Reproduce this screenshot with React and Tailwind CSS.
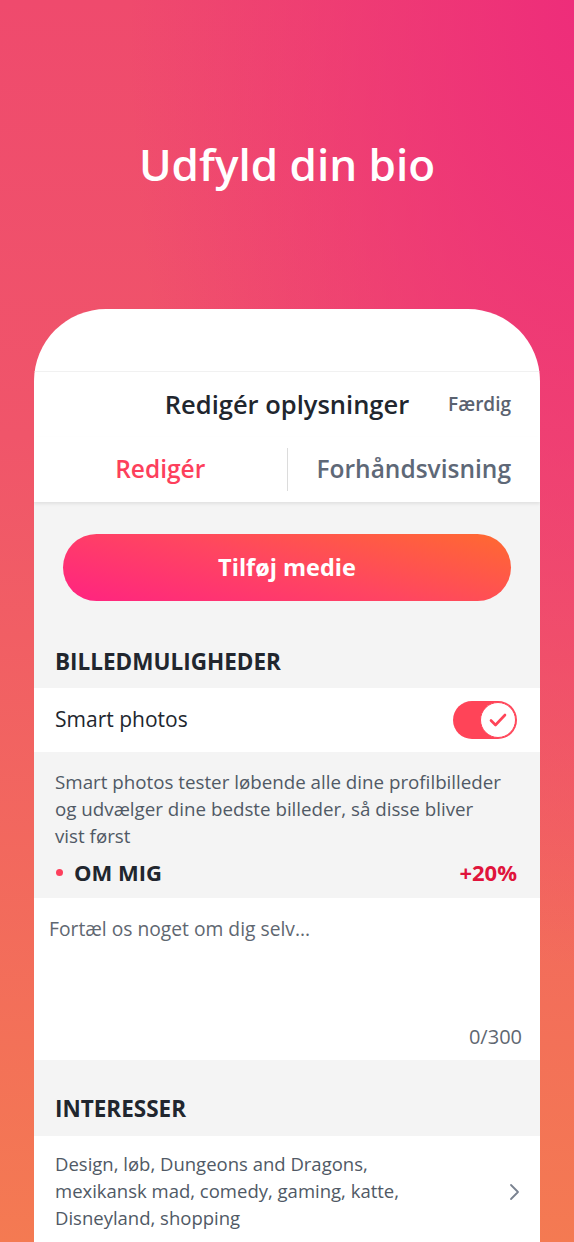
import React from 'react';

const FONT = { fontFamily: '"Open Sans", Lato, Arial, sans-serif' };

function Toggle() {
  return (
    <div className="w-[64px] h-[38px] rounded-full bg-[#ff4458] flex items-center justify-end p-[1px]">
      <div className="w-[36px] h-[36px] rounded-full bg-white border-[1.5px] border-[#ff4458] flex items-center justify-center">
        <svg width="18" height="14" viewBox="0 0 18 14" fill="none">
          <path d="M2 7.5l4.5 4.5L16 2" stroke="#ff4458" strokeWidth="2.6" strokeLinecap="round" strokeLinejoin="round" />
        </svg>
      </div>
    </div>
  );
}

function SectionTitle({ children }) {
  return (
    <div className="flex items-end px-[21px]">
      <span className="text-[22.5px] leading-[24px] font-bold text-[#21262e]">{children}</span>
    </div>
  );
}

export default function App() {
  return (
    <div
      style={FONT}
      className="w-[574px] h-[1242px] overflow-hidden flex flex-col bg-[radial-gradient(ellipse_at_top_right,#ee2d7a_0%,rgba(238,45,122,0)_55%),linear-gradient(180deg,#ef4a6d_0%,#f0556a_35%,#f47a52_100%)]"
    >
      <h1 className="pt-[136px] text-center text-white text-[44px] leading-[56px] font-semibold">Udfyld din bio</h1>

      <div className="mt-[117px] mx-[34px] flex-1 bg-white rounded-t-[72px] overflow-hidden flex flex-col">
        <div className="h-[63px] border-b border-[#f1f1f1]" />

        {/* header */}
        <div className="h-[65px] relative flex items-center justify-center">
          <span className="text-[25.5px] font-semibold text-[#21262e]">Redigér oplysninger</span>
          <span className="absolute right-[29px] text-[19px] font-semibold text-[#5a6270]">Færdig</span>
        </div>

        {/* tabs */}
        <div className="h-[65px] flex items-center shadow-[0_2px_3px_rgba(0,0,0,0.08)] relative z-10">
          <div className="flex-1 text-center text-[24.5px] font-semibold text-[#fd3f5c]">Redigér</div>
          <div className="w-px h-[43px] bg-[#dcdcdc]" />
          <div className="flex-1 text-center text-[24.5px] font-semibold text-[#5e6877]">Forhåndsvisning</div>
        </div>

        <div className="flex-1 bg-[#f4f4f4] flex flex-col">
          <div className="pt-[32px] px-[29px]">
            <button className="w-full h-[67px] rounded-full bg-[linear-gradient(15deg,#ff2381_0%,#ff4660_50%,#ff6a30_100%)] text-white text-[23.5px] font-bold">
              Tilføj medie
            </button>
          </div>

          <div className="h-[87px] flex items-end pb-[14px]">
            <SectionTitle>BILLEDMULIGHEDER</SectionTitle>
          </div>

          <div className="h-[64px] bg-white flex items-center justify-between pl-[21px] pr-[23px]">
            <span className="text-[21px] text-[#21262e]">Smart photos</span>
            <Toggle />
          </div>

          <div className="pt-[16px] pb-[11px] pl-[21px] pr-[23px]">
            <p className="text-[18.75px] leading-[27px] text-[#505965]">
              Smart photos tester løbende alle dine profilbilleder
              <br />
              og udvælger dine bedste billeder, så disse bliver
              <br />
              vist først
            </p>
            <div className="mt-[8px] flex items-center justify-between">
              <div className="flex items-center">
                <span className="w-[7px] h-[7px] rounded-full bg-[#fd3f5c] ml-[1px] mr-[11px]" />
                <span className="text-[22px] leading-[30px] font-bold text-[#21262e]">OM MIG</span>
              </div>
              <span className="text-[22px] leading-[30px] font-bold text-[#e0143c]">+20%</span>
            </div>
          </div>

          <div className="h-[162px] bg-white flex flex-col justify-between pt-[17px] pb-[10px] pl-[15px] pr-[18px]">
            <span className="text-[19.25px] leading-[27px] text-[#5f6771]">Fortæl os noget om dig selv...</span>
            <span className="self-end text-[20px] leading-[27px] text-[#5f6771]">0/300</span>
          </div>

          <div className="h-[76px] flex items-end pb-[15px]">
            <SectionTitle>INTERESSER</SectionTitle>
          </div>

          <div className="flex-1 bg-white flex items-start pt-[14px] pl-[21px] pr-[19px]">
            <p className="flex-1 text-[18.5px] leading-[27px] text-[#505965] pr-[70px]">
              Design, løb, Dungeons and Dragons, mexikansk mad, comedy, gaming, katte, Disneyland, shopping
            </p>
            <svg className="mt-[33px]" width="12" height="18" viewBox="0 0 12 18" fill="none">
              <path d="M2 2l7 7-7 7" stroke="#7a8290" strokeWidth="1.8" strokeLinecap="round" strokeLinejoin="round" />
            </svg>
          </div>
        </div>
      </div>
    </div>
  );
}
